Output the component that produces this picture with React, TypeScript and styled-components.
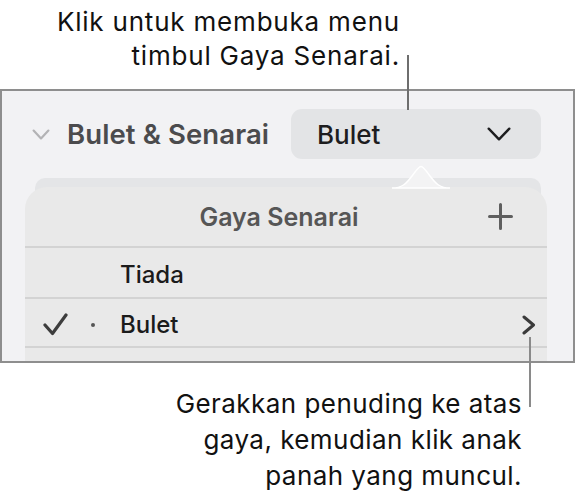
import React from "react";
import styled, { createGlobalStyle } from "styled-components";

const Global = createGlobalStyle`
  html, body { margin: 0; padding: 0; background: #ffffff; }
  body {
    font-family: Inter, "Noto Sans", sans-serif;
    -webkit-font-smoothing: antialiased;
  }
`;

const Page = styled.div`
  position: relative;
  width: 575px;
  height: 495px;
  overflow: hidden;
  display: flex;
  flex-direction: column;
`;

const Caption = styled.p<{ $top: number; $right: number; $lh: number; $ls: number }>`
  margin: ${(p) => p.$top}px ${(p) => p.$right}px 0 0;
  text-align: right;
  font-size: 26px;
  line-height: ${(p) => p.$lh}px;
  font-weight: 400;
  letter-spacing: ${(p) => p.$ls}px;
  color: #111111;
`;

const Leader = styled.div<{ $x: number; $y: number; $h: number; $c: string }>`
  position: absolute;
  left: ${(p) => p.$x}px;
  top: ${(p) => p.$y}px;
  width: 2px;
  height: ${(p) => p.$h}px;
  background: ${(p) => p.$c};
  z-index: 5;
`;

const Frame = styled.section`
  position: relative;
  flex-shrink: 0;
  margin-top: 16px;
  height: 274px;
  box-sizing: border-box;
  border: 2px solid #8e8e8e;
  background: #f2f2f4;
  overflow: hidden;
  display: flex;
  flex-direction: column;
`;

const Header = styled.div`
  display: flex;
  align-items: center;
  flex-shrink: 0;
  height: 50px;
  margin-top: 18px;
  padding: 0 32px 0 30px;
`;

const Heading = styled.h2`
  margin: 0 0 0 17px;
  font-size: 27.5px;
  font-weight: 600;
  color: #4b4b4d;
  letter-spacing: 0.1px;
`;

const Dropdown = styled.button`
  margin-left: auto;
  width: 250px;
  height: 50px;
  border: none;
  border-radius: 11px;
  background: #e3e4e6;
  display: flex;
  align-items: center;
  justify-content: space-between;
  padding: 0 30px 0 26px;
  font-family: inherit;
  font-size: 26px;
  font-weight: 500;
  color: #1d1d1f;
`;

const BackCard = styled.div`
  flex: 1;
  margin: 19px 32px 0 33px;
  border-radius: 10px 10px 0 0;
  background: #e4e5e7;
`;

const Popover = styled.div`
  position: absolute;
  left: 23px;
  right: 26px;
  top: 96px;
  height: 240px;
  border-radius: 22px 22px 0 0;
  background: #e9e9e9;
  display: flex;
  flex-direction: column;
`;

const Caret = styled.svg`
  position: absolute;
  left: 367px;
  top: -22px;
`;

const PopHeader = styled.div`
  display: flex;
  align-items: center;
  flex-shrink: 0;
  height: 61px;
  box-sizing: border-box;
  border-bottom: 2px solid #d3d3d3;
  padding: 0 34px 0 45px;
`;

const PopTitle = styled.div`
  flex: 1;
  text-align: center;
  font-size: 25px;
  font-weight: 600;
  color: #565656;
`;

const Row = styled.div<{ $h: number }>`
  display: grid;
  grid-template-columns: 24px 53px 1fr auto;
  align-items: center;
  flex-shrink: 0;
  height: ${(p) => p.$h}px;
  box-sizing: border-box;
  padding: 4px 11px 0 18px;
  border-bottom: 2px solid #d3d3d3;
`;

const RowLabel = styled.span`
  font-size: 24px;
  font-weight: 500;
  color: #1b1b1b;
`;

const Dot = styled.span`
  justify-self: center;
  width: 4px;
  height: 4px;
  border-radius: 50%;
  background: #555;
  margin-left: -2px;
`;

const ChevronDown = ({ color, w, h, sw }: { color: string; w: number; h: number; sw: number }) => (
  <svg width={w} height={h} viewBox={`0 0 ${w} ${h}`} fill="none">
    <path
      d={`M${sw / 2 + 0.5} ${sw / 2 + 0.5} L${w / 2} ${h - sw / 2 - 0.5} L${w - sw / 2 - 0.5} ${sw / 2 + 0.5}`}
      stroke={color}
      strokeWidth={sw}
      strokeLinecap="round"
      strokeLinejoin="round"
    />
  </svg>
);

const Plus = () => (
  <svg width="25" height="27" viewBox="0 0 25 27" fill="none">
    <path d="M12.5 1.5 V25.5 M1.5 13.5 H23.5" stroke="#5f5f5f" strokeWidth="3" strokeLinecap="round" />
  </svg>
);

const Check = () => (
  <svg width="25" height="23" viewBox="0 0 25 23" fill="none">
    <path d="M2 12 L9.5 20.5 L23 2" stroke="#3d3d3d" strokeWidth="3.2" strokeLinecap="round" strokeLinejoin="round" />
  </svg>
);

const ChevronRight = () => (
  <svg width="14" height="20" viewBox="0 0 14 20" fill="none">
    <path d="M2 2 L11.5 10 L2 18" stroke="#3a3a3a" strokeWidth="3" strokeLinecap="round" strokeLinejoin="round" />
  </svg>
);

export default function App() {
  return (
    <>
      <Global />
      <Page>
        <Caption $top={5} $right={175} $lh={34} $ls={0.8}>
          Klik untuk membuka menu
          <br />
          timbul Gaya Senarai.
        </Caption>
        <Leader $x={407} $y={55} $h={55} $c="#6e6e6e" />
        <Frame>
          <Header>
            <ChevronDown color="#b3b3b5" w={18} h={11} sw={2.2} />
            <Heading>Bulet &amp; Senarai</Heading>
            <Dropdown>
              Bulet
              <ChevronDown color="#1d1d1f" w={24} h={14} sw={2.4} />
            </Dropdown>
          </Header>
          <BackCard />
          <Popover>
            <Caret width="58" height="24" viewBox="0 0 58 24">
              <path
                d="M0 23 C10 23 14 19 20 11 C25 4 27 1.5 29 1.5 C31 1.5 33 4 38 11 C44 19 48 23 58 23 Z"
                fill="#f3f3f4"
                stroke="#ffffff"
                strokeWidth="1.5"
              />
            </Caret>
            <PopHeader>
              <PopTitle>Gaya Senarai</PopTitle>
              <Plus />
            </PopHeader>
            <Row $h={51}>
              <span />
              <span />
              <RowLabel>Tiada</RowLabel>
              <span />
            </Row>
            <Row $h={49}>
              <Check />
              <Dot />
              <RowLabel>Bulet</RowLabel>
              <ChevronRight />
            </Row>
            <Row $h={49} />
          </Popover>
        </Frame>
        <Leader $x={529} $y={337} $h={70} $c="#8a8a8a" />
        <Caption $top={23} $right={53} $lh={36} $ls={0.45}>
          Gerakkan penuding ke atas
          <br />
          gaya, kemudian klik anak
          <br />
          panah yang muncul.
        </Caption>
      </Page>
    </>
  );
}
